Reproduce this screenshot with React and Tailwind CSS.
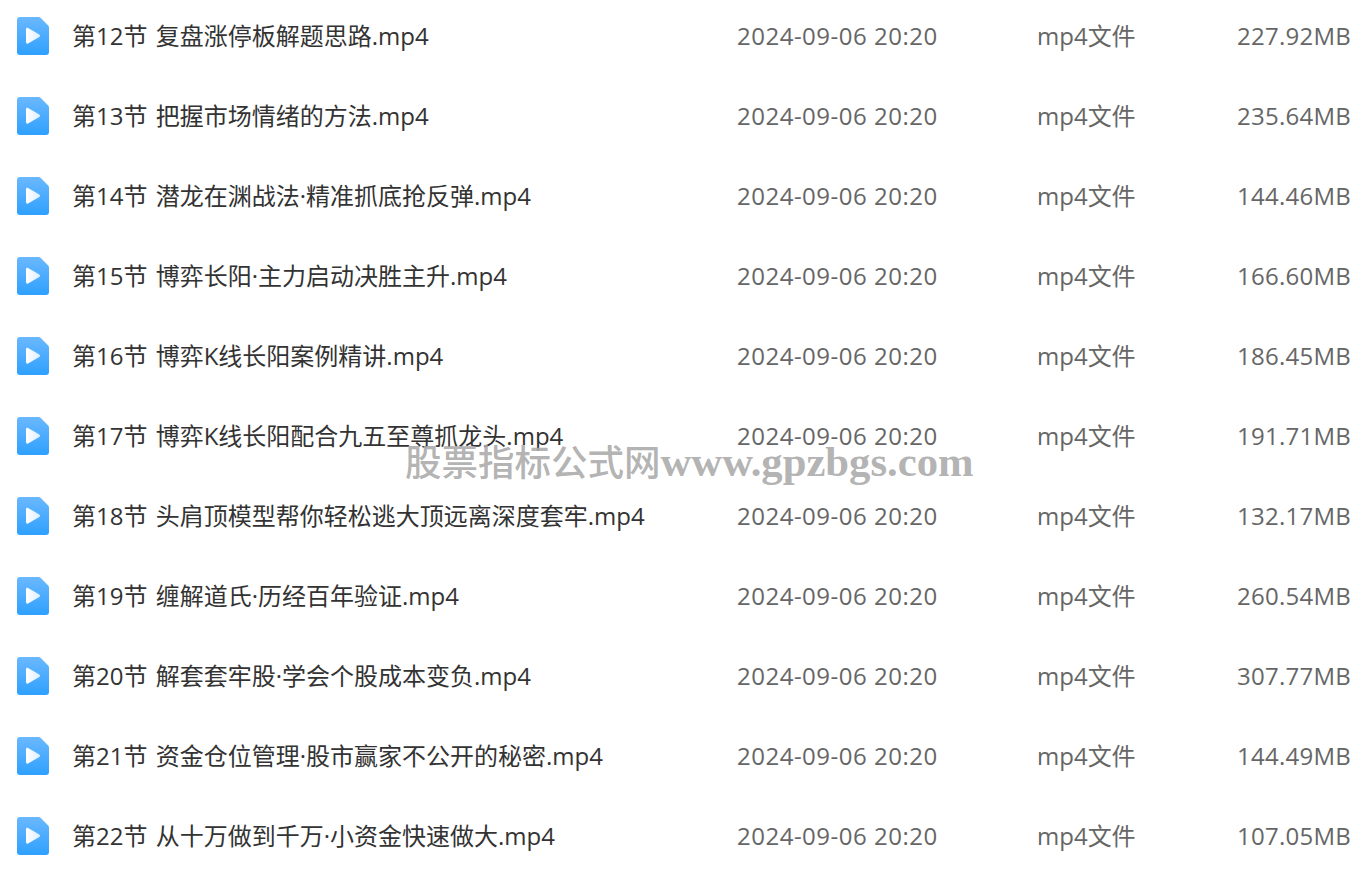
const files = [
  ["第12节 复盘涨停板解题思路.mp4", "227.92MB"],
  ["第13节 把握市场情绪的方法.mp4", "235.64MB"],
  ["第14节 潜龙在渊战法·精准抓底抢反弹.mp4", "144.46MB"],
  ["第15节 博弈长阳·主力启动决胜主升.mp4", "166.60MB"],
  ["第16节 博弈K线长阳案例精讲.mp4", "186.45MB"],
  ["第17节 博弈K线长阳配合九五至尊抓龙头.mp4", "191.71MB"],
  ["第18节 头肩顶模型帮你轻松逃大顶远离深度套牢.mp4", "132.17MB"],
  ["第19节 缠解道氏·历经百年验证.mp4", "260.54MB"],
  ["第20节 解套套牢股·学会个股成本变负.mp4", "307.77MB"],
  ["第21节 资金仓位管理·股市赢家不公开的秘密.mp4", "144.49MB"],
  ["第22节 从十万做到千万·小资金快速做大.mp4", "107.05MB"],
];

function VideoIcon() {
  return (
    <svg width="32" height="38" viewBox="0 0 32 38" className="shrink-0">
      <defs>
        <linearGradient id="fileBlue" x1="0" y1="0" x2="0" y2="1">
          <stop offset="0" stopColor="#6ab8ff" />
          <stop offset="1" stopColor="#2ea0ff" />
        </linearGradient>
        <linearGradient id="playWhite" x1="0" y1="0" x2="1" y2="0">
          <stop offset="0" stopColor="#ffffff" />
          <stop offset="1" stopColor="#dceeff" />
        </linearGradient>
      </defs>
      <path
        d="M3 0H21.5c.8 0 1.5.3 2 .8L31.2 8.5c.5.5.8 1.2.8 2V35a3 3 0 0 1-3 3H3a3 3 0 0 1-3-3V3a3 3 0 0 1 3-3Z"
        fill="url(#fileBlue)"
      />
      <path
        d="M9 12.2c0-1.1 1.2-1.8 2.1-1.2l11.2 6.5c.9.5.9 1.9 0 2.4l-11.2 6.6c-.9.6-2.1-.1-2.1-1.2Z"
        fill="url(#playWhite)"
      />
    </svg>
  );
}

export default function App() {
  return (
    <div className="relative h-[869px] overflow-hidden bg-white font-['Open_Sans','Noto_Sans_CJK_SC',sans-serif] text-[24px]">
      {/* file rows */}
      <div className="-mt-1 flex flex-col">
        {files.map(([name, size]) => (
          <div key={name} className="flex h-20 shrink-0 items-center pl-[17px] pr-[21px]">
            <VideoIcon />
            <div className="ml-[23px] w-[665px] shrink-0 whitespace-nowrap text-[#333] [word-spacing:2px]">{name}</div>
            <div className="w-[300px] shrink-0 whitespace-nowrap tracking-[0.5px] text-[#666]">2024-09-06 20:20</div>
            <div className="whitespace-nowrap text-[#666]">mp4文件</div>
            <div className="ml-auto whitespace-nowrap tracking-[0.25px] text-[#666]">{size}</div>
          </div>
        ))}
      </div>

      {/* watermark */}
      <div className="absolute left-[405px] top-[437px] flex items-baseline whitespace-nowrap leading-[48px] text-[#aaa]/90">
        <span className="font-['Noto_Sans_CJK_SC',serif] text-[36.5px] font-medium">股票指标公式网</span>
        <span className="font-['Liberation_Serif',serif] text-[42.7px] font-bold">www.gpzbgs.com</span>
      </div>
    </div>
  );
}
